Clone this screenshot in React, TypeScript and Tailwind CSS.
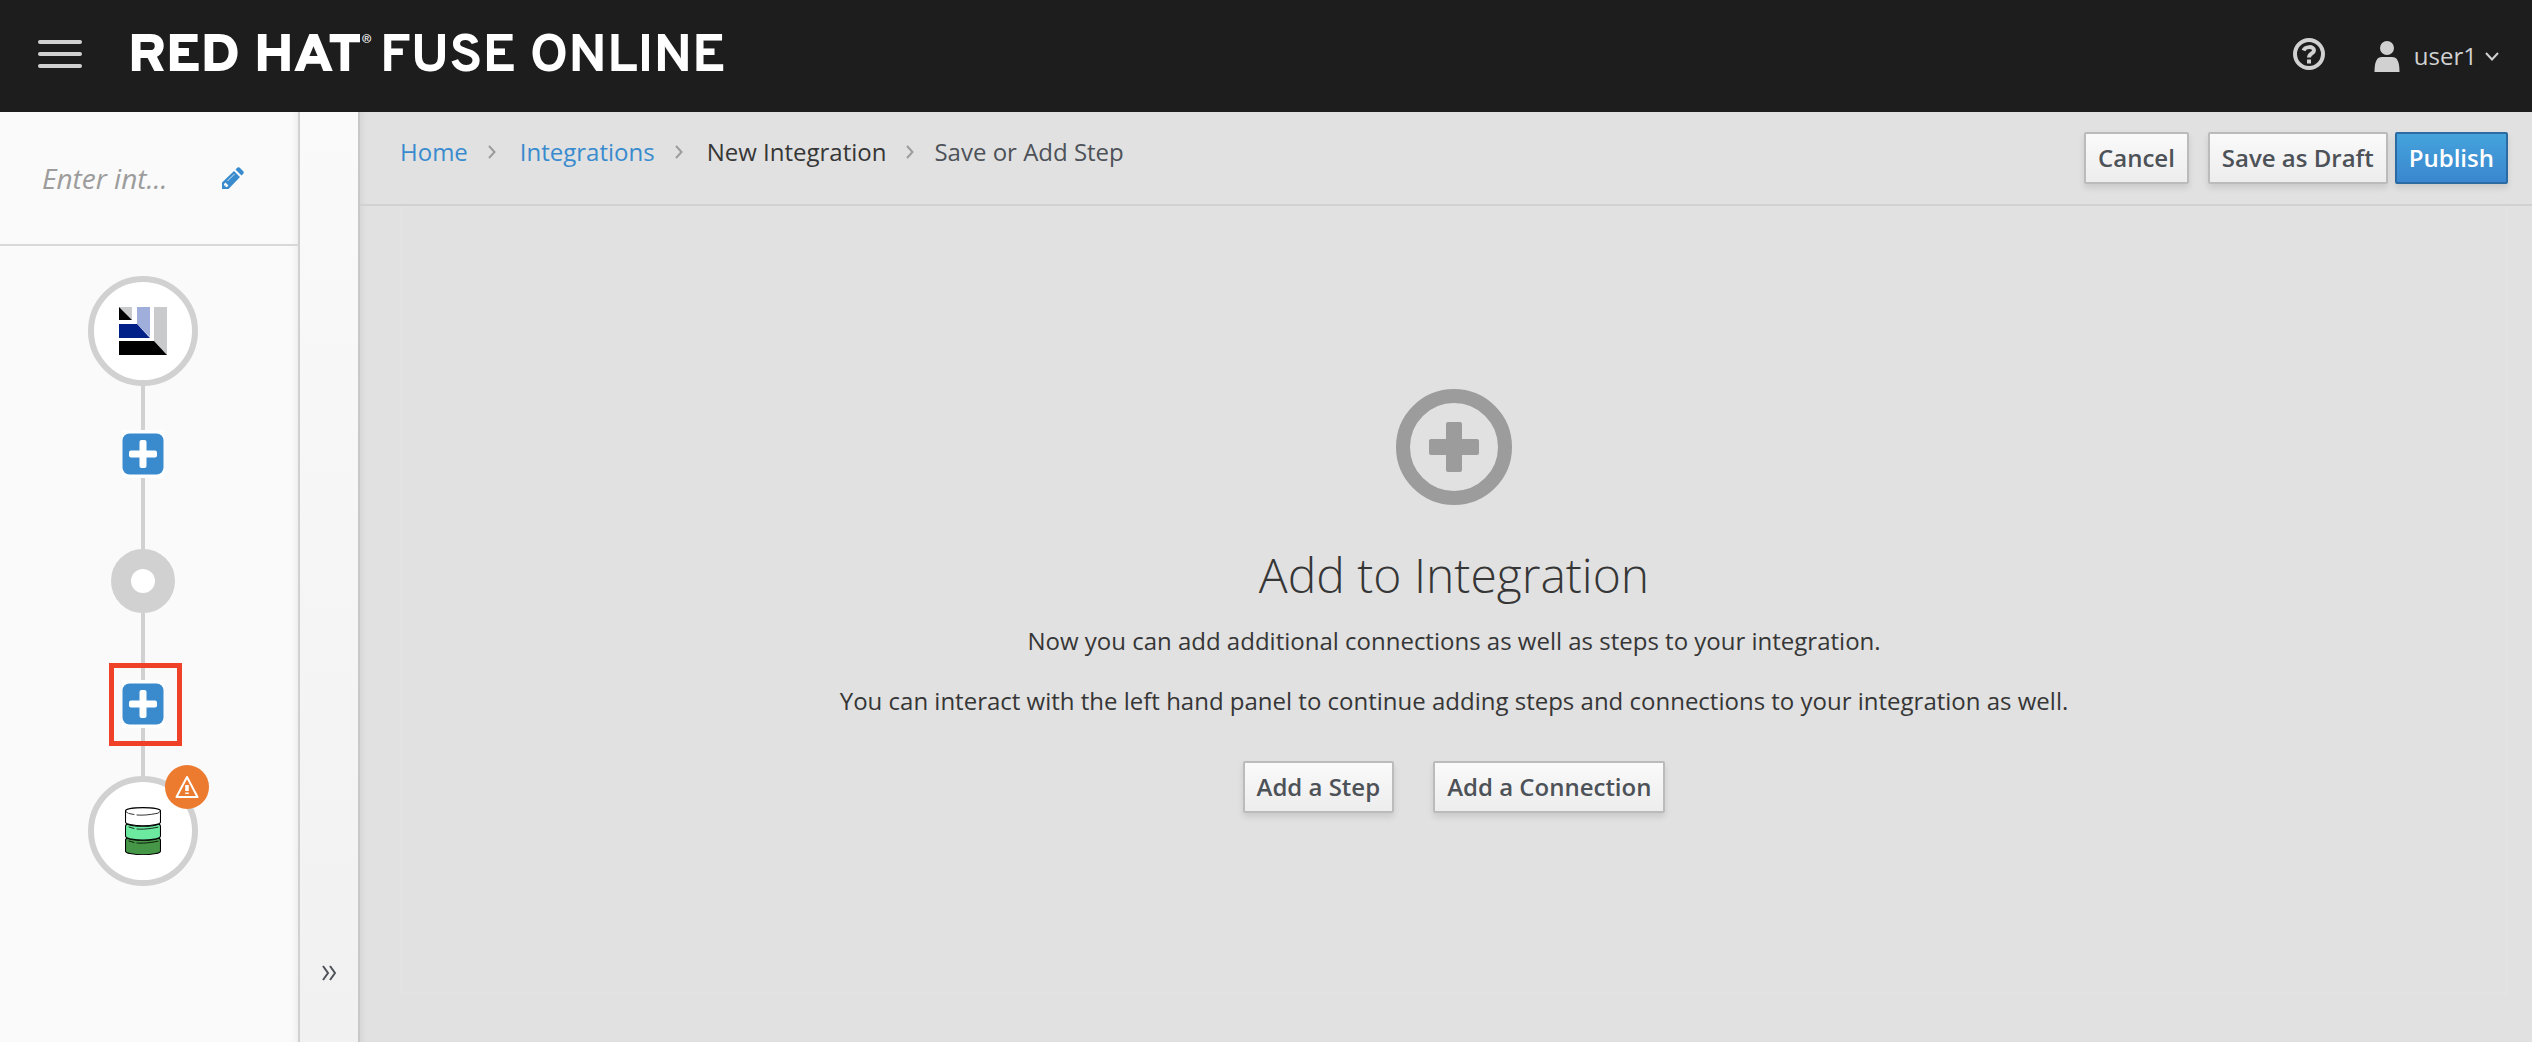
import React from "react";

function Connector({ className }: { className: string }) {
  return <div className={`w-1 bg-[#d1d1d1] ${className}`} />;
}

function AddStepButton() {
  return (
    <button type="button" aria-label="Add a step or connection" className="flex h-12 w-[42px] items-center justify-center bg-white">
      <svg viewBox="0 0 42 42" className="size-[42px]" aria-hidden="true">
        <rect x="0.5" y="0.5" width="41" height="41" rx="7" fill="#398bce" />
        <rect x="17.500" y="7" width="7" height="28" rx="2" fill="#fff" />
        <rect x="7" y="17.500" width="28" height="7" rx="2" fill="#fff" />
      </svg>
    </button>
  );
}

function BarsLogo() {
  return (
    <svg viewBox="0 0 48 48" className="size-12" role="img" aria-label="Start connection">
      <path d="M0 0H13V13Z" fill="#c9cacc" />
      <path d="M0 0V13H13Z" fill="#000" />
      <path d="M18 0H31V30L18 17Z" fill="#a0aedb" />
      <path d="M0 17H18L31 31H0Z" fill="#001f87" />
      <path d="M35 0H48V48L35 34Z" fill="#c9cacc" />
      <path d="M0 34H35L48 48H0Z" fill="#000" />
    </svg>
  );
}

function DatabaseLogo() {
  return (
    <svg viewBox="0 0 36 48" className="h-12 w-9" role="img" aria-label="Finish connection" stroke="#000" strokeWidth="1.1" strokeLinejoin="round" strokeLinecap="round" fill="none">
      <path d="M2 31C0.500 32 0.500 32.500 0.500 33.500V44C0.500 45 2 46 5 46.500C13 48 23 48 31 46.500C34 46 35.500 45 35.500 44V33.500C35.500 32.500 35.500 32 34 31C28 34 8 34 2 31Z" fill="#459646" />
      <path d="M2 17C0.500 18 0.500 18.500 0.500 19.500V29C0.500 30 2 31 5 31.800C13 33.300 23 33.300 31 31.800C34 31 35.500 30 35.500 29V19.500C35.500 18.500 35.500 18 34 17C28 20 8 20 2 17Z" fill="#6ceaa0" />
      <path d="M0.500 4V15C0.500 16 2 17 5 17.500C13 19 23 19 31 17.500C34 17 35.500 16 35.500 15V4C35.500 -0.500 0.500 -0.500 0.500 4Z" fill="#fff" />
      <path d="M0.500 4C1 5 2 5.500 3 6M4 6.500L9 7.500M12 8C17 8.500 24 8 33 6.200L35.500 4M4 20L9 21.500M12 22C17 22.500 24 22 33 20.200M4 34L9 35.500M12 36C17 36.500 24 36 33 34.200" strokeWidth="0.800" />
    </svg>
  );
}

function CrumbArrow() {
  return (
    <svg viewBox="0 0 8 14" className="h-3.5 w-2" fill="none" stroke="#9c9c9c" strokeWidth="2" aria-hidden="true">
      <path d="M1 1L6.500 7L1 13" />
    </svg>
  );
}

const plainButton =
  "h-[52px] rounded-xs border-2 border-[#bbb] bg-linear-to-b from-[#fafafa] to-[#ededed] px-3 font-semibold text-[#4d5258] shadow-[0_4px_6px_rgba(3,3,3,0.1)]";

export default function App() {
  return (
    <div className="flex min-h-screen flex-col bg-[#e1e1e1] font-['Open_Sans',sans-serif] text-2xl leading-10 text-[#363636]">
      <header className="flex h-28 items-center bg-[#1d1d1d] pr-[33px] pb-1 pl-[38px] text-[#d1d1d1]">
        <button type="button" aria-label="Toggle navigation" className="flex w-11 flex-col gap-2">
          <span className="h-1 rounded-full bg-[#d1d1d1]" />
          <span className="h-1 rounded-full bg-[#d1d1d1]" />
          <span className="h-1 rounded-full bg-[#d1d1d1]" />
        </button>
        <div className="ml-[46px] flex items-center pt-2 font-['Overpass',Roboto,sans-serif] text-[54px] leading-[60px] whitespace-nowrap text-white">
          <span className="font-black">RED HAT</span>
          <span className="mt-1 self-start text-xs">®</span>
          <span className="ml-2 font-bold">FUSE ONLINE</span>
        </div>
        <div className="ml-auto flex items-center">
          <button type="button" aria-label="Help">
            <svg viewBox="0 0 32 32" className="size-8" fill="none" stroke="#d1d1d1" aria-hidden="true">
              <circle cx="16" cy="16" r="14" strokeWidth="4" />
              <path d="M10.500 12.500C12 8.500 21 7.500 21 12.500C21 15.500 16 15.500 16 19.500" strokeWidth="4" />
              <path d="M14 21.500H18V25.500H14Z" fill="#d1d1d1" stroke="none" />
            </svg>
          </button>
          <button type="button" className="ml-[49px] flex items-center pt-1">
            <svg viewBox="0 0 26 31" className="h-[31px] w-[26px]" fill="#d1d1d1" aria-hidden="true">
              <circle cx="13" cy="7" r="7" />
              <path d="M0.500 31C0.500 20 3 16 8 16H18C23 16 25.500 20 25.500 31Z" />
            </svg>
            <span className="ml-3.5">user1</span>
            <svg viewBox="0 0 14 9" className="ml-2 h-[9px] w-3.5" fill="none" stroke="#d1d1d1" strokeWidth="2" aria-hidden="true">
              <path d="M1 1L7 7.500L13 1" />
            </svg>
          </button>
        </div>
      </header>

      <div className="flex grow">
        <aside className="w-[300px] shrink-0 border-r-2 border-[#d1d1d1] bg-[#fafafa] shadow-[inset_-6px_0_6px_-4px_rgba(0,0,0,0.06)]">
          <div className="flex h-[134px] items-center border-b-2 border-[#d8d8d8] pl-[42px] text-[#9c9c9c]">
            <span className="text-[28px] italic">Enter int...</span>
            <button type="button" aria-label="Edit integration name" className="ml-auto pr-[54px]">
              <svg viewBox="0 0 22 22" className="size-[22px]" aria-hidden="true">
                <path d="M0 22V15.500L12 4L18 10L6.500 22ZM13.500 2.500L15.500 0.500Q16.500 0 17.500 0.500L21.500 4.500Q22 5.500 21.500 6.500L19.500 8.500Z" fill="#398bce" />
                <path d="M2 17L3.500 15.500L6.500 18.500L5 20H3.500V18.500H2Z" fill="#fafafa" />
                <path d="M5.500 14L12.500 7" stroke="#fafafa" strokeWidth="0.800" />
              </svg>
            </button>
          </div>
          <div className="flex flex-col items-center pt-[30px] pr-3">
            <div className="flex size-[110px] items-center justify-center rounded-full border-6 border-[#d1d1d1] bg-white">
              <BarsLogo />
            </div>
            <Connector className="h-11" />
            <AddStepButton />
            <Connector className="h-[71px]" />
            <div className="size-16 rounded-full border-20 border-[#d1d1d1] bg-white" />
            <Connector className="h-[67px]" />
            <div className="relative">
              <AddStepButton />
              <div className="pointer-events-none absolute -top-[17px] -left-[13px] h-[83px] w-[73px] border-5 border-[#ee4128]" />
            </div>
            <Connector className="h-12" />
            <div className="relative flex size-[110px] items-center justify-center rounded-full border-6 border-[#d1d1d1] bg-white">
              <DatabaseLogo />
              <span className="absolute -top-[17px] -right-[17px] flex size-11 items-center justify-center rounded-full bg-[#ec7a2f]">
                <svg viewBox="0 0 24 24" className="size-6" role="img" aria-label="Warning" fill="none" stroke="#fff">
                  <path d="M12 2L22.500 22H1.500Z" strokeWidth="2" strokeLinejoin="round" />
                  <path d="M12 10V16M12 17.500V19" strokeWidth="3.500" />
                </svg>
              </span>
            </div>
          </div>
        </aside>

        <div className="flex w-[60px] shrink-0 flex-col justify-end border-r-2 border-[#c8c8c8] bg-linear-to-b from-[#fafafa] to-[#f1f1f1] pb-[61px]">
          <button type="button" aria-label="Expand panel" className="mx-auto">
            <svg viewBox="0 0 14 16" className="h-4 w-3.5" fill="none" stroke="#4d5258" strokeWidth="2" aria-hidden="true">
              <path d="M1 1L6 8L1 15M8 1L13 8L8 15" />
            </svg>
          </button>
        </div>

        <main className="flex grow flex-col shadow-[inset_6px_0_6px_-4px_rgba(0,0,0,0.06)]">
          <div className="flex h-[94px] items-start justify-between border-b-2 border-[#d1d1d1] pr-6 pl-10">
            <nav aria-label="Breadcrumb" className="mt-5">
              <ol className="flex items-center">
                <li><a href="#home" className="text-[#398bce]">Home</a></li>
                <li className="mr-6 ml-5"><CrumbArrow /></li>
                <li><a href="#integrations" className="text-[#398bce]">Integrations</a></li>
                <li className="mr-6 ml-5"><CrumbArrow /></li>
                <li>New Integration</li>
                <li className="mx-5"><CrumbArrow /></li>
                <li className="text-[#4d5258]">Save or Add Step</li>
              </ol>
            </nav>
            <div className="mt-5 flex">
              <button type="button" className={plainButton}>Cancel</button>
              <button type="button" className={`ml-[19px] ${plainButton}`}>Save as Draft</button>
              <button type="button" className="ml-[7px] h-[52px] rounded-xs border-2 border-[#2b6aa3] bg-linear-to-b from-[#45a3db] to-[#3a87cf] px-3 font-semibold text-white shadow-[0_4px_6px_rgba(3,3,3,0.1)]">
                Publish
              </button>
            </div>
          </div>
          <section className="mx-6 mb-12 ml-10 flex grow flex-col items-center border-2 border-t-0 border-[#e3e3e3] pt-[183px]">
            <svg viewBox="0 0 116 116" className="size-[116px]" aria-hidden="true">
              <circle cx="58" cy="58" r="51" fill="none" stroke="#9c9c9c" strokeWidth="14" />
              <rect x="50" y="33" width="16" height="50" rx="2" fill="#9c9c9c" />
              <rect x="33" y="50" width="50" height="16" rx="2" fill="#9c9c9c" />
            </svg>
            <h1 className="mt-[38px] text-5xl leading-[64px] font-light">Add to Integration</h1>
            <p className="mt-3.5">Now you can add additional connections as well as steps to your integration.</p>
            <p className="mt-5">You can interact with the left hand panel to continue adding steps and connections to your integration as well.</p>
            <div className="mt-10 flex gap-[39px]">
              <button type="button" className={plainButton}>Add a Step</button>
              <button type="button" className={plainButton}>Add a Connection</button>
            </div>
          </section>
        </main>
      </div>
    </div>
  );
}
